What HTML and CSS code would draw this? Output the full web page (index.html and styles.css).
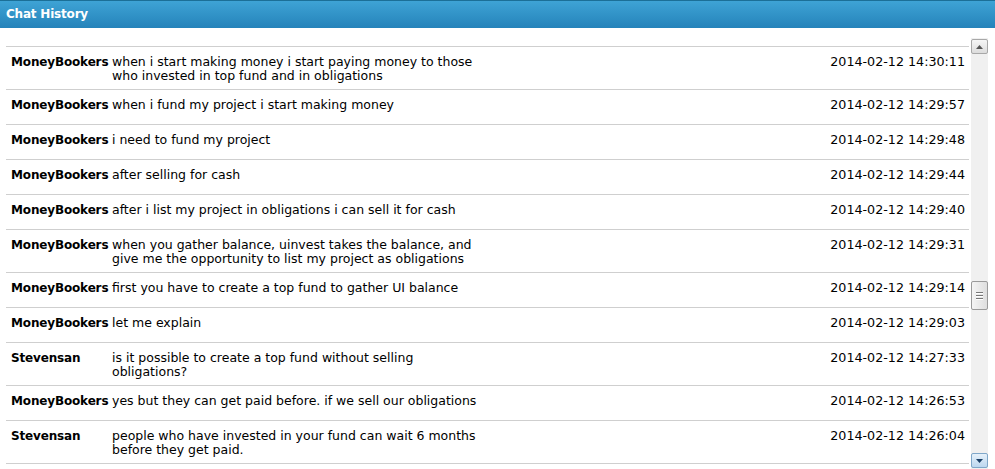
FILE: index.html
```html
<!DOCTYPE html>
<html>
<head>
<meta charset="utf-8">
<link rel="stylesheet" href="styles.css">
</head>
<body>
<div class="panel">
  <div class="header">Chat History</div>
  <div class="body">
    <div class="list">
      <div class="row"><div class="name">MoneyBookers</div><div class="msg">when i start making money i start paying money to those who invested in top fund and in obligations</div><div class="time">2014-02-12 14:30:11</div></div>
      <div class="row"><div class="name">MoneyBookers</div><div class="msg">when i fund my project i start making money</div><div class="time">2014-02-12 14:29:57</div></div>
      <div class="row"><div class="name">MoneyBookers</div><div class="msg">i need to fund my project</div><div class="time">2014-02-12 14:29:48</div></div>
      <div class="row"><div class="name">MoneyBookers</div><div class="msg">after selling for cash</div><div class="time">2014-02-12 14:29:44</div></div>
      <div class="row"><div class="name">MoneyBookers</div><div class="msg">after i list my project in obligations i can sell it for cash</div><div class="time">2014-02-12 14:29:40</div></div>
      <div class="row"><div class="name">MoneyBookers</div><div class="msg">when you gather balance, uinvest takes the balance, and give me the opportunity to list my project as obligations</div><div class="time">2014-02-12 14:29:31</div></div>
      <div class="row"><div class="name">MoneyBookers</div><div class="msg">first you have to create a top fund to gather UI balance</div><div class="time">2014-02-12 14:29:14</div></div>
      <div class="row"><div class="name">MoneyBookers</div><div class="msg">let me explain</div><div class="time">2014-02-12 14:29:03</div></div>
      <div class="row"><div class="name">Stevensan</div><div class="msg">is it possible to create a top fund without selling obligations?</div><div class="time">2014-02-12 14:27:33</div></div>
      <div class="row"><div class="name">MoneyBookers</div><div class="msg">yes but they can get paid before. if we sell our obligations</div><div class="time">2014-02-12 14:26:53</div></div>
      <div class="row"><div class="name">Stevensan</div><div class="msg">people who have invested in your fund can wait 6 months before they get paid.</div><div class="time">2014-02-12 14:26:04</div></div>
    </div>
    <div class="scrollbar">
      <div class="sb-btn"><svg width="7" height="4" viewBox="0 0 7 4"><path d="M0 4 L3.5 0 L7 4 Z" fill="#555"/></svg></div>
      <div class="sb-track">
        <div class="sb-thumb"><span></span><span></span><span></span></div>
      </div>
      <div class="sb-btn sb-down"><svg width="7" height="4" viewBox="0 0 7 4"><path d="M0 0 L3.5 4 L7 0 Z" fill="#1a3f66"/></svg></div>
    </div>
  </div>
</div>
</body>
</html>
```
FILE: styles.css
```css
html, body {
  margin: 0;
  padding: 0;
  background: #fff;
}
body {
  font-family: Verdana, "DejaVu Sans", sans-serif;
  font-size: 12.5px;
  color: #000;
  overflow: hidden;
}
.panel {
  width: 995px;
  height: 469px;
  display: flex;
  flex-direction: column;
}
.header {
  height: 28px;
  box-sizing: border-box;
  border-top: 1px solid #1b6f97;
  background: linear-gradient(#3ea3d5, #2583ba);
  color: #fff;
  font-weight: bold;
  font-size: 12px;
  line-height: 26px;
  padding-left: 6px;
  letter-spacing: -0.2px;
}
.body {
  flex: 1;
  display: flex;
  padding: 10px 7px 0 6px;
  min-height: 0;
}
.list {
  flex: 1;
  display: flex;
  flex-direction: column;
  padding-top: 8px;
  min-width: 0;
}
.row {
  display: flex;
  align-items: flex-start;
  border-top: 1px solid #cfcfcf;
  padding: 8px 0 6px;
  min-height: 20px;
  line-height: 14px;
  flex-shrink: 0;
}
.row:last-child {
  border-bottom: 1px solid #cfcfcf;
}
.name {
  width: 101px;
  padding-left: 5px;
  font-weight: bold;
  font-size: 12px;
  letter-spacing: -0.15px;
  flex-shrink: 0;
  white-space: nowrap;
}
.msg {
  width: 372px;
  flex-shrink: 0;
}
.time {
  margin-left: auto;
  padding-right: 4px;
  white-space: nowrap;
  font-size: 12.7px;
}
.scrollbar {
  width: 17px;
  margin-left: 2px;
  display: flex;
  flex-direction: column;
  background: #f0f0f0;
}
.sb-btn {
  height: 15px;
  margin: 1px 0;
  border: 1px solid #a8a8a8;
  border-radius: 2px;
  background: linear-gradient(#f6f6f6, #dcdcdc);
  display: flex;
  align-items: center;
  justify-content: center;
  box-sizing: border-box;
}
.sb-down {
  border-color: #7fa7c9;
  background: linear-gradient(#e6f1fa, #bcd7ef);
}
.sb-track {
  flex: 1;
  display: flex;
  flex-direction: column;
  justify-content: center;
  padding-top: 84px;
}
.sb-thumb {
  height: 29px;
  box-sizing: border-box;
  border: 1px solid #9a9a9a;
  border-radius: 2px;
  background: linear-gradient(90deg, #f4f4f4, #dedede);
  display: flex;
  flex-direction: column;
  align-items: center;
  justify-content: center;
  gap: 1px;
}
.sb-thumb span {
  width: 7px;
  height: 1px;
  background: #777;
  border-bottom: 1px solid #fff;
}
```
